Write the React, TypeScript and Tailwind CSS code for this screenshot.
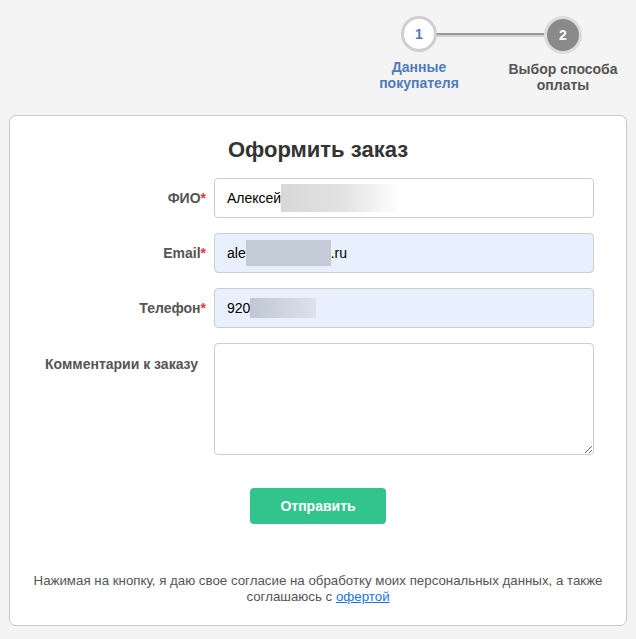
import React from 'react';

const Step: React.FC<{ n: number; active?: boolean; label: React.ReactNode }> = ({ n, active, label }) => (
  <div className="flex flex-col items-center w-[120px]">
    <div
      className={
        active
          ? 'w-[36px] h-[36px] rounded-full border-[3px] border-[#cfcfcf] bg-white flex items-center justify-center text-[14px] font-bold text-[#4f7bb8]'
          : 'w-[38px] h-[38px] rounded-full border-[3px] border-[#dcdcdc] bg-[#8a8a8a] flex items-center justify-center text-[14px] font-bold text-white'
      }
    >
      {n}
    </div>
    <div
      className={
        'mt-[7px] text-center text-[14px] font-bold leading-[16px] ' +
        (active ? 'text-[#4f7bb8]' : 'text-[#555]')
      }
    >
      {label}
    </div>
  </div>
);

const Label: React.FC<{ text: string; required?: boolean; top?: boolean }> = ({ text, required, top }) => (
  <div className={'w-[196px] text-right text-[14px] font-bold text-[#555] ' + (top ? 'pt-[11px] pr-[8px]' : '')}>
    {text}
    {required && <span className="text-[#e53935]">*</span>}
  </div>
);

export default function App() {
  return (
    <div className="min-h-[639px] bg-[#f4f4f4] font-['Liberation_Sans',Arial,sans-serif] pt-[16px] pb-[15px]">
      <div className="flex justify-end pr-[13px]">
        <div className="relative flex items-start">
          <div className="absolute left-[77px] right-[77px] top-[17px] h-[4px] bg-[#d4d4d4] border-t-[2px] border-[#999]" />
          <div className="relative flex gap-[24px]">
            <Step n={1} active label={<>Данные<br />покупателя</>} />
            <Step n={2} label={<>Выбор способа<br />оплаты</>} />
          </div>
        </div>
      </div>

      <div className="mx-[9px] mt-[22px] bg-white border border-[#c8c8c8] rounded-[7px] pt-[20px] pb-[20px]">
        <h1 className="text-center text-[22px] font-bold text-[#333] leading-[28px]">Оформить заказ</h1>

        <div className="mt-[14px] flex flex-col gap-[15px]">
          <div className="flex items-center">
            <Label text="ФИО" required />
            <div className="ml-[8px] w-[380px] h-[40px] rounded-[4px] border border-[#ccc] bg-white flex items-center pl-[12px] text-[14px] text-black">
              Алексей
              <span className="inline-block w-[120px] h-[28px] bg-gradient-to-r from-[#d8d8d8] via-[#e2e2e2] to-white" />
            </div>
          </div>
          <div className="flex items-center">
            <Label text="Email" required />
            <div className="ml-[8px] w-[380px] h-[40px] rounded-[4px] border border-[#ccc] bg-[#e8f0fe] flex items-center pl-[12px] text-[14px] text-black">
              ale
              <span className="inline-block w-[85px] h-[26px] bg-[#c3cbd6]" />
              .ru
            </div>
          </div>
          <div className="flex items-center">
            <Label text="Телефон" required />
            <div className="ml-[8px] w-[380px] h-[40px] rounded-[4px] border border-[#ccc] bg-[#e8f0fe] flex items-center pl-[12px] text-[14px] text-black">
              920
              <span className="inline-block w-[66px] h-[20px] bg-gradient-to-r from-[#bfc7d2] to-[#dbe2ec]" />
            </div>
          </div>
          <div className="flex items-start">
            <Label text="Комментарии к заказу" top />
            <textarea className="ml-[8px] w-[380px] h-[112px] rounded-[4px] border border-[#ccc] bg-white resize-y outline-none" />
          </div>
        </div>

        <div className="flex justify-center mt-[33px]">
          <button className="w-[136px] h-[36px] rounded-[4px] bg-[#32c48d] text-white text-[14px] font-bold">
            Отправить
          </button>
        </div>

        <p className="mt-[49px] px-[20px] text-center text-[13.3px] leading-[16px] text-[#555]">
          Нажимая на кнопку, я даю свое согласие на обработку моих персональных данных, а также
          <br />
          соглашаюсь с <a href="#" className="text-[#1a73e8] underline">офертой</a>
        </p>
      </div>
    </div>
  );
}
